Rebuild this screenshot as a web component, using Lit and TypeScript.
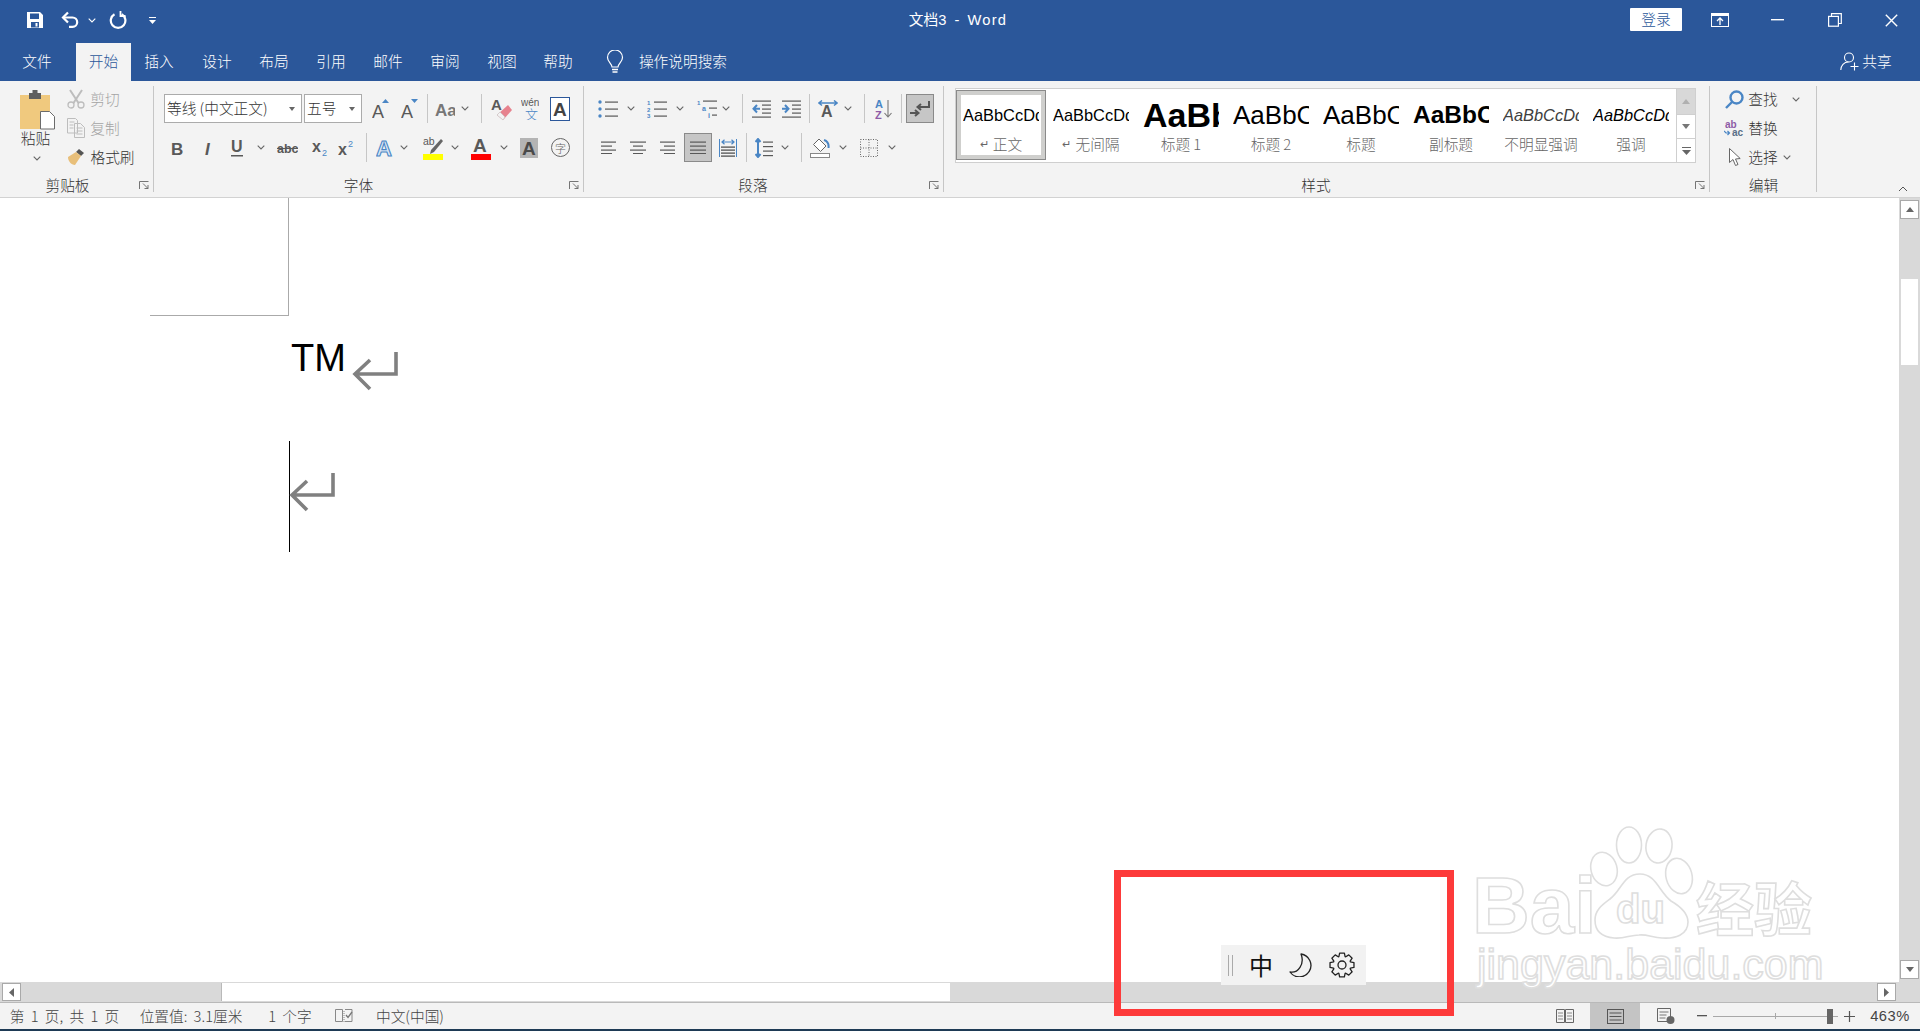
import { LitElement, html, css, svg } from "lit";
import { customElement } from "lit/decorators.js";

type It = [number, number, unknown, string?];

const row = (items: It[], origin: number, cls = "") => {
  let x = origin;
  return html`<div class="row ${cls}">${items.map(([c, w, t, k]) => {
    const l = c - w / 2;
    const m = l - x;
    x = l + w;
    return html`<div class="slot ${k ?? ""}" style="margin-left:${m}px;width:${w}px">${t}</div>`;
  })}</div>`;
};

const s = (w: number, h: number, c: unknown) =>
  html`<svg width=${w} height=${h} viewBox="0 0 ${w} ${h}" fill="none">${c}</svg>`;

const G = "#595959", B = "#4a86c5", D = "#2b579a";
const chev = (col = "#666") => s(8, 5, svg`<path d="M.7.7 4 4 7.3.7" stroke=${col} stroke-width="1.1"/>`);
const sep = () => html`<i class="vs"></i>`;
const letter = (t: string, x: number, y: number, size: number, fill: string, weight = "bold", style = "normal") =>
  svg`<text x=${x} y=${y} font-family="Liberation Sans" font-size=${size} font-weight=${weight} font-style=${style} fill=${fill}>${t}</text>`;
const lines = (x: number, w: number, ys: number[], col = G) =>
  svg`${ys.map((y) => svg`<rect x=${x} y=${y} width=${w} height="1.2" fill=${col}/>`)}`;

const gear = () => {
  const cx = 13, cy = 13, n = 8;
  let d = "";
  for (let i = 0; i < n; i++) {
    const a = (i / n) * Math.PI * 2;
    const st = Math.PI / n;
    const pts: [number, number][] = [
      [9, a - st * 0.9], [12.2, a - st * 0.5], [12.2, a + st * 0.5], [9, a + st * 0.9],
    ];
    pts.forEach(([r, t], j) => {
      d += `${i === 0 && j === 0 ? "M" : "L"}${(cx + r * Math.cos(t)).toFixed(2)} ${(cy + r * Math.sin(t)).toFixed(2)} `;
    });
  }
  return s(26, 26, svg`<path d="${d}Z" stroke="#222" stroke-width="1.3" stroke-linejoin="round"/><circle cx="13" cy="13" r="4" stroke="#222" stroke-width="1.3"/>`);
};

const ret = () => s(46, 40, svg`<path d="M44 1V23H4M18 9 3 23l15 15" stroke="#808080" stroke-width="3.6" fill="none"/>`);

const icons = {
  save: s(18, 18, svg`<path fill-rule="evenodd" fill="#fff" d="M1 1h13l3 3v13H1zM4 2.5V8h9V2.5zM5 11v5.5h8V11zM9.5 12h2v3.5h-2z"/>`),
  undo: s(20, 18, svg`<path d="M3 6.5h9.5a4.7 4.7 0 0 1 0 9.4H9" stroke="#fff" stroke-width="2.2"/><path d="M8 1.5 3 6.5l5 5" stroke="#fff" stroke-width="2.2"/>`),
  redo: s(18, 20, svg`<path d="M5.5 4.2a7.3 7.3 0 1 0 7.2 0" stroke="#fff" stroke-width="2.2"/><path d="M12.5 1v5h5" stroke="#fff" stroke-width="1.8" transform="translate(-1 0)"/>`),
  qat: s(8, 9, svg`<rect y="1" width="7" height="1" fill="#fff"/><path d="M0 4h7L3.5 8z" fill="#fff"/>`),
  display: s(18, 14, svg`<rect x=".5" y=".5" width="17" height="13" stroke="#fff"/><rect y="0" width="18" height="3" fill="#fff"/><path d="M9 12V5M6 8l3-3 3 3" stroke="#fff" stroke-width="1.3"/>`),
  min: s(13, 2, svg`<rect width="13" height="1.4" fill="#fff"/>`),
  restore: s(14, 14, svg`<rect x=".6" y="3.4" width="9.8" height="9.8" stroke="#fff" stroke-width="1.2"/><path d="M3.5 3.4V.7h9.8v9.8h-2.7" stroke="#fff" stroke-width="1.2"/>`),
  close: s(13, 13, svg`<path d="M.8.8l11.4 11.4M12.2.8.8 12.2" stroke="#fff" stroke-width="1.4"/>`),
  bulb: s(18, 24, svg`<path d="M6 17c0-3-4.500-5-4.500-9.500a7.500 7.500 0 0 1 15 0C16.500 12 12 14 12 17z" stroke="#fff" stroke-width="1.2"/><path d="M6 19.500h6M6.500 22h5" stroke="#fff" stroke-width="1.5"/>`),
  share: s(19, 19, svg`<circle cx="9" cy="5.500" r="4.500" stroke="#fff" stroke-width="1.1"/><path d="M.8 18c0-4.500 3.200-8 7.700-8M14.500 10.500V18.500M10.500 14.500h8" stroke="#fff" stroke-width="1.1"/>`),
  paste: s(36, 40, svg`<rect x="0" y="5" width="30" height="34" fill="#f0c97e"/><rect x="9" y="3" width="12" height="6" fill="#5f5f5f"/><rect x="12.500" y="0" width="5" height="5" fill="#5f5f5f"/><path d="M20.500 21.500h9l5 5v12.500h-14z" fill="#fff" stroke="#6b6b6b"/>`),
  cut: s(18, 20, svg`<circle cx="4" cy="16" r="3" stroke="#bdbdbd" stroke-width="1.3"/><circle cx="14" cy="16" r="3" stroke="#bdbdbd" stroke-width="1.3"/><path d="M3 1l8.500 13M15 1 6.500 14" stroke="#bdbdbd" stroke-width="2"/>`),
  copy: s(18, 20, svg`<path d="M.5.500h8l2 2V15H.5zM7.500 5.500h6l4 4v10h-10z" stroke="#bdbdbd" fill="#f3f3f3"/><path d="M2.500 4h5M2.500 7h4M2.500 10h4M9.500 10h6M9.500 13h6M9.500 16h6" stroke="#bdbdbd"/>`),
  brush: s(20, 18, svg`<path d="M13 1l5 4-3 3-5-4z" fill="#555"/><path d="M2 9l8-5 5 4-6 9c-4 0-7-4-7-8z" fill="#e8bf7a"/>`),
  aUp: s(17, 20, svg`${letter("A", 0, 19, 18, G, "normal")}<path d="M10 4h7L13.500 0z" fill=${B}/>`),
  aDown: s(17, 20, svg`${letter("A", 0, 19, 18, G, "normal")}<path d="M10 0h7l-3.500 4z" fill=${B}/>`),
  aa: s(20, 18, svg`${letter("Aa", 0, 16, 17, "#777")}`),
  eraser: s(21, 24, svg`${letter("A", 0, 13, 15, G)}<path d="M17 8l4 5-9 10-6-5z" fill="#e7828e"/><path d="M6 18l3-3 5 5-2 3z" fill="#f3f3f3" stroke="#bbb" stroke-width=".5"/>`),
  wen: s(18, 22, svg`${letter("wén", 0, 8, 10, G, "normal")}<text x="4" y="21" font-size="13" fill=${B} font-family="Noto Sans CJK SC">文</text>`),
  aBox: s(20, 24, svg`<rect x=".5" y=".5" width="19" height="23" stroke=${D} fill="#fff"/>${letter("A", 3, 19, 19, "#444", "bold")}`),
  b: s(12, 18, svg`${letter("B", 0, 16, 17, G)}`),
  i: s(10, 18, svg`${letter("I", 2, 16, 17, G, "bold", "italic")}`),
  u: s(13, 20, svg`${letter("U", 0, 14, 16, G)}<rect y="17" width="12" height="1.500" fill=${G}/>`),
  abc: s(21, 14, svg`${letter("abc", 0, 12, 12.500, G)}<rect y="7" width="21" height="1" fill=${G}/>`),
  sub: s(16, 18, svg`${letter("x", 0, 13, 16, G)}${letter("2", 10, 17, 9, B, "normal")}`),
  sup: s(16, 18, svg`${letter("x", 0, 16, 16, G)}${letter("2", 10, 8, 9, B, "normal")}`),
  fx: s(18, 22, svg`${letter("A", 0, 19, 22, "#fff")}<text x="0" y="19" font-family="Liberation Sans" font-size="22" font-weight="bold" fill="#dce9f6" stroke=${B} stroke-width="1.100">A</text>`),
  hi: s(20, 24, svg`${letter("ab", 0, 9, 10.500, G, "normal")}<path d="M18 3l2 2-9 11-4 2 1-4z" fill="#666"/><rect y="18" width="20" height="6" fill="#ff0"/>`),
  red: s(20, 24, svg`${letter("A", 2, 16, 19, G)}<rect y="18" width="20" height="6" fill="#f00"/>`),
  shade: s(18, 20, svg`<rect width="18" height="20" fill="#b4b4b4"/>${letter("A", 2, 17, 19, "#4a4a4a")}`),
  zi: s(19, 19, svg`<circle cx="9.500" cy="9.500" r="9" stroke="#666"/><text x="4" y="14.500" font-size="11" fill="#666" font-family="Noto Sans CJK SC">字</text>`),
  bullets: s(20, 18, svg`<circle cx="2" cy="2" r="1.700" fill=${B}/><circle cx="2" cy="9" r="1.700" fill=${B}/><circle cx="2" cy="16" r="1.700" fill=${B}/>${lines(7, 13, [1.5, 8.5, 15.5])}`),
  nums: s(20, 18, svg`${letter("1", 0, 5, 6, B)}${letter("2", 0, 12, 6, B)}${letter("3", 0, 18, 6, B)}${lines(7, 13, [1.5, 8.5, 15.5])}`),
  multi: s(20, 20, svg`${letter("1", 0, 6, 6, B)}${letter("a", 5, 12, 7, B)}${letter("i", 11, 19, 7, B)}${lines(6, 14, [1.5])}${lines(12, 8, [8.5])}${lines(15, 5, [15.5])}`),
  dedent: s(19, 18, svg`${lines(0, 19, [0.5, 16.5])}${lines(10, 9, [4.5, 8.5, 12.5])}<path d="M8 8.800H2M5 5 1.500 8.800 5 12.500" stroke=${B} stroke-width="2"/>`),
  indent: s(19, 18, svg`${lines(0, 19, [0.5, 16.5])}${lines(10, 9, [4.5, 8.5, 12.5])}<path d="M0 8.800h6M3 5l3.500 3.800L3 12.500" stroke=${B} stroke-width="2"/>`),
  cjk: s(20, 18, svg`${letter("A", 3, 17, 16, G)}<path d="M1 3h18M4 .500 1 3l3 2.500M16 .500 19 3l-3 2.500" stroke=${B} stroke-width="1.500"/>`),
  sort: s(18, 20, svg`${letter("A", 0, 9, 11, B)}${letter("Z", 0, 20, 11, "#8e5ba6")}<path d="M13 1v17M9.500 14l3.500 4 3.500-4" stroke="#777" stroke-width="1.100"/>`),
  para: s(22, 18, svg`<path d="M20 1v6H9M12 4 8.500 7l3.500 3" stroke="#555" stroke-width="2"/><path d="M1 13h8M6 10l3.500 3L6 16" stroke="#555" stroke-width="2"/>`),
  left: s(15, 13, svg`${lines(0, 15, [0.5, 8.5])}${lines(0, 11, [4.5, 12])}`),
  center: s(16, 13, svg`${lines(0, 16, [0.5, 8.5])}${lines(3, 10, [4.5, 12])}`),
  right: s(15, 13, svg`${lines(0, 15, [0.5, 8.5])}${lines(4, 11, [4.5, 12])}`),
  justify: s(16, 13, svg`${lines(0, 16, [0.5, 4.5, 8.5, 12])}`),
  dist: s(18, 18, svg`<path d="M.5 0v18M17.500 0v18" stroke=${B}/><path d="M3 3h12M5.500 .800 3 3l2.500 2.200M12.500 .800 15 3l-2.500 2.200" stroke=${B} stroke-width="1.200"/>${lines(2, 14, [7.5, 10.5, 13.5, 16.5], "#444")}`),
  spacing: s(18, 20, svg`<path d="M3 1v18M.5 4 3 1l2.500 3M.5 16 3 19l2.500-3" stroke=${B} stroke-width="2"/>${lines(8, 10, [3.5, 8, 12.5, 17])}`),
  fill: s(20, 20, svg`<path d="M9 1l7 7-5.500 5.500-7-7z" fill="#fff" stroke="#666"/><path d="M14 2c3 1 5 4 4.500 8" stroke=${B} stroke-width="2"/><rect x=".5" y="15.500" width="19" height="4" fill="#fff" stroke="#888"/>`),
  borders: s(18, 18, svg`<path d="M.5.500h17v17H.5zM.5 9h17M9 .500v17" stroke="#666" stroke-dasharray="1 1.500"/>`),
  launcher: s(10, 8, svg`<path d="M.5 8V.500H9.500M4 2.500 9 7.500M9 4v3.500H5.500" stroke="#666" stroke-width=".9"/>`),
  find: s(19, 19, svg`<circle cx="11.500" cy="7.500" r="6" stroke=${B} stroke-width="2.400"/><path d="M7 12 1 18" stroke=${B} stroke-width="2.400"/>`),
  replace: s(20, 17, svg`${letter("ab", 1, 8, 10, "#8e5ba6")}<path d="M0 11l2 2h3M3.500 11l2 2-2 2" stroke=${B} stroke-width="1.200"/>${letter("ac", 8, 16, 10, "#5a6f87")}`),
  select: s(12, 18, svg`<path d="M.5.500v14l3.500-3 2.500 6 2.500-1-2.500-5.500 4.700-.5z" fill="#fff" stroke="#666"/>`),
  up: s(10, 5, svg`<path d="M1 5 5 1l4 4" stroke="#555" fill="none"/>`),
  triU: (c: string) => s(8, 5, svg`<path d="M0 5h8L4 0z" fill=${c}/>`),
  triD: (c: string) => s(8, 5, svg`<path d="M0 0h8L4 5z" fill=${c}/>`),
  triL: s(5, 9, svg`<path d="M5 0v9L0 4.500z" fill="#666"/>`),
  triR: s(5, 9, svg`<path d="M0 0v9l5-4.500z" fill="#666"/>`),
  more: s(9, 8, svg`<rect width="9" height="1" fill="#666"/><path d="M0 3h9L4.500 8z" fill="#666"/>`),
  proof: s(18, 14, svg`<path d="M.5.500h7v12h-7zM10 .500h7v12h-7" stroke="#888"/><path d="M9 2v12" stroke="#888" stroke-dasharray="1 1"/><path d="M11 6l2 2.500L17 3" stroke="#777" stroke-width="1.300"/>`),
  read: s(18, 15, svg`<path d="M.5.500h8v13h-8zM9.500.500h8v13h-8z" stroke="#666"/><path d="M2 4h5M2 7h5M2 10h5M11 4h5M11 7h5M11 10h5" stroke="#888"/>`),
  print: s(17, 15, svg`<rect x=".5" y=".5" width="16" height="14" stroke="#555"/><path d="M2.500 4h12M2.500 7.500h12M2.500 11h12" stroke="#555"/>`),
  web: s(18, 16, svg`<path d="M.5.500h13v13H.5z" stroke="#666"/><path d="M2.500 4h9M2.500 7h7M2.500 10h6" stroke="#777"/><circle cx="13.500" cy="12" r="4" fill="#666"/>`),
  moon: s(24, 24, svg`<path d="M12 1A11.500 11.500 0 1 1 1 19C9 20.500 16 11 12 1Z" stroke="#222" stroke-width="1.300" fill="none" stroke-linejoin="round"/>`),
};

const tabs: [string, number][] = [["插入", 159], ["设计", 217], ["布局", 274], ["引用", 331], ["邮件", 388], ["审阅", 445], ["视图", 502], ["帮助", 558]];

const styleItems = [
  { t: "AaBbCcDd", c: "p-body", n: "正文", ret: true, sel: true },
  { t: "AaBbCcDd", c: "p-body", n: "无间隔", ret: true },
  { t: "AaBbC", c: "p-h1", n: "标题 1" },
  { t: "AaBbCcD", c: "p-h2", n: "标题 2" },
  { t: "AaBbCcD", c: "p-h2", n: "标题" },
  { t: "AaBbCcD", c: "p-sub", n: "副标题" },
  { t: "AaBbCcDd", c: "p-em1", n: "不明显强调" },
  { t: "AaBbCcDd", c: "p-em2", n: "强调" },
];

@customElement("app-root")
export class AppRoot extends LitElement {
  static styles = css`
    :host { display: block; width: 1920px; height: 1031px; overflow: hidden; position: relative;
      font-family: "Noto Sans CJK SC", "Liberation Sans", sans-serif; font-size: 14.7px; font-weight: 300; color: #333; background: #fff; }
    .app { display: flex; flex-direction: column; height: 1031px; }
    .row { display: flex; align-items: center; }
    .slot { display: flex; align-items: center; justify-content: center; white-space: nowrap; flex: none; line-height: 1; }
    svg { display: block; flex: none; }
    .title { height: 43px; flex: none; box-sizing: border-box; padding-bottom: 3px; background: #2b579a; color: #fff; }
    .tabs { height: 38px; flex: none; background: #2b579a; color: #fff; align-items: stretch; }
    .wtitle { font-family: "Liberation Sans", "Noto Sans CJK SC", sans-serif; font-weight: 400; }
    .wd { letter-spacing: 1.2px; }
    .signin { height: 23px; margin-top: -1px; background: #fff; color: #2b579a; border-radius: 1px; }
    .tabs .slot { padding-bottom: 1px; box-sizing: border-box; }
    .tabs .on { background: #f3f3f3; color: #2b579a; }
    .ribbon { height: 117px; flex: none; box-sizing: border-box; background: #f3f3f3; border-bottom: 1px solid #d2d2d2; display: flex; padding-top: 5px; }
    .group { flex: none; height: 110px; display: flex; flex-direction: column; }
    .gbody { height: 90px; flex: none; box-sizing: border-box; }
    .glabel { height: 19px; flex: none; display: flex; align-items: center; position: relative; }
    .sepv { width: 1px; height: 106px; background: #c6c6c6; flex: none; }
    .g1 { width: 153px; } .g2 { width: 429px; } .g3 { width: 359px; } .g4 { width: 765px; } .g5 { width: 106px; } .g6 { flex: 1; min-width: 0; }
    .launch { position: absolute; top: 5px; }
    .clip { display: flex; }
    .pastecol { width: 64px; flex: none; display: flex; flex-direction: column; align-items: center; padding: 4px 0 0 12px; box-sizing: border-box; }
    .pastecol .ptxt { margin: -2px 5px 0 0; height: 20px; line-height: 20px; }
    .pastecol .pch { margin: 8px 3px 0 0; }
    .rows3 { display: flex; flex-direction: column; }
    .rows3 > .row:first-child { margin-top: -1.5px; }
    .rows3 .row { height: 29px; flex: none; }
    .dim { color: #a4a4a4; }
    .rows2 { padding-top: 8px; display: flex; flex-direction: column; gap: 10px; }
    .rows2 .row { height: 29px; }
    .vs { display: block; width: 1px; height: 29px; background: #c6c6c6; }
    .sel { height: 29px; box-sizing: border-box; border: 1px solid #ababab; background: #fff; padding: 0 2px; justify-content: space-between; }
    .sel b { display: block; width: 0; height: 0; border: 3.500px solid transparent; border-top: 4px solid #666; border-bottom: 0; margin-right: 4px; }
    .act { height: 29px; box-sizing: border-box; background: #c6c6c6; border: 1px solid #8a8a8a; }
    .gallery { margin: 2px 0 0 11px; height: 75px; width: 741px; box-sizing: border-box; border: 1px solid #cfcfcf; background: #fff; display: flex; padding-top: 1px; }
    .gi { width: 90px; height: 70px; flex: none; box-sizing: border-box; padding-top: 5px; }
    .gi.s { box-shadow: inset 0 0 0 1px #8a8a8a, inset 0 0 0 5px #cfcfcd; }
    .pv { height: 40px; margin: 0 7px; overflow: hidden; display: flex; align-items: center; color: #000; white-space: nowrap; font-family: "Liberation Sans", sans-serif; font-weight: 400; line-height: 1; }
    .p-body { font-size: 16.4px; } .p-h1 { font-size: 34px; font-weight: bold; } .p-h2 { font-size: 26px; } .p-sub { font-size: 24.5px; font-weight: bold; }
    .p-em1 { font-size: 16.4px; font-style: italic; color: #404040; } .p-em2 { font-size: 16.4px; font-style: italic; }
    .nm { height: 18px; display: flex; align-items: center; justify-content: center; color: #666; line-height: 1; white-space: nowrap; }
    .nm span.r { font-size: 11px; margin-right: 4px; font-family: "DejaVu Sans", sans-serif; }
    .gscroll { margin-left: auto; width: 18px; flex: none; margin-top: -1px; border-left: 1px solid #cfcfcf; display: flex; flex-direction: column; box-sizing: content-box; }
    .gscroll div { display: flex; align-items: center; justify-content: center; flex: none; box-sizing: border-box; border-bottom: 1px solid #cfcfcf; }
    .gscroll .a { height: 26px; background: #d8d8d8; }
    .gscroll .b { height: 24px; }
    .gscroll .c { height: 24px; border-bottom: 0; }
    .collapse { display: flex; justify-content: flex-end; align-items: flex-end; height: 105px; padding-right: 12px; box-sizing: border-box; }
    .main { flex: 1; min-height: 0; display: flex; position: relative; }
    .doc { flex: 1; min-width: 0; }
    .crop { margin-left: 150px; width: 138px; height: 117px; border-right: 1px solid #aaa; border-bottom: 1px solid #aaa; }
    .tm { margin: 35px 0 0 291px; height: 50px; display: flex; align-items: flex-start; }
    .tm span { font-family: "Liberation Sans", sans-serif; font-weight: 400; font-size: 38px; color: #000; line-height: 1; margin-top: -12px; }
    .tm svg { margin-left: 6px; }
    .cur { margin: 40px 0 0 289px; height: 111px; box-sizing: border-box; border-left: 1.5px solid #000; padding-top: 31px; }
    .cur svg { margin-left: -1px; }
    .vbar { width: 21px; flex: none; background: #d9d9d9; display: flex; flex-direction: column; align-items: center; padding-top: 2px; box-sizing: border-box; }
    .btn { box-sizing: border-box; background: #fff; border: 1px solid #a9a9a9; display: flex; align-items: center; justify-content: center; flex: none; }
    .vbtn { width: 19px; height: 19px; }
    .vth { width: 17px; height: 86px; background: #fff; margin-top: 60px; flex: none; }
    .vbar .end { margin-top: auto; margin-bottom: 3px; }
    .hbar { height: 21px; flex: none; background: #d9d9d9; border-bottom: 1px solid #b9b9b9; box-sizing: border-box; display: flex; align-items: center; }
    .hbtn { width: 19px; height: 18px; margin-left: 2px; }
    .hth { width: 729px; height: 18px; background: #fff; margin-left: 200px; border-left: 1px solid #b9b9b9; box-sizing: border-box; }
    .hbar .rbtn { margin-left: 927px; }
    .status { height: 26px; flex: none; background: #f3f3f3; color: #444; font-size: 14.7px; word-spacing: 3px; }
    .status .on { background: #c4c4c4; height: 26px; }
    .bottom { height: 2px; flex: none; background: #1e3a55; }
    .pct { font-family: "Liberation Sans", sans-serif; font-weight: 400; letter-spacing: .5px; }
    .slider { height: 26px; position: relative; }
    .sl { position: absolute; left: 0; right: 0; top: 12.500px; height: 1px; background: #a8a8a8; }
    .tick { position: absolute; left: 62px; top: 10px; height: 6px; width: 1px; background: #a8a8a8; }
    .knob { position: absolute; left: 114px; top: 6px; width: 6px; height: 15px; background: #666; }
    .mark { position: absolute; left: 1475px; top: 825px; width: 345px; height: 170px; pointer-events: none; }
    .mark svg { overflow: visible; }
    .ime { position: absolute; left: 1221px; top: 945px; width: 145px; height: 40px; background: #f2f2f2; display: flex; align-items: center; color: #111; }
    .grip { width: 3px; height: 21px; border-left: 1px solid #aaa; border-right: 1px solid #aaa; margin-left: 7px; flex: none; }
    .zh { font-size: 24px; line-height: 1; margin-left: 16px; font-weight: 400; }
    .ime .m { margin-left: 16px; }
    .ime .g { margin-left: 16px; }
    .redbox { position: absolute; left: 1114px; top: 870px; width: 340px; height: 146px; box-sizing: border-box; border: 7px solid #fd3a3a; pointer-events: none; }
  `;

  render() {
    const lab = (t: string) => html`<span>${t}</span>`;
    return html`<div class="app">
      ${row([
        [35, 18, icons.save], [70, 20, icons.undo], [92, 8, chev("#fff")], [118, 18, icons.redo], [153, 8, icons.qat],
        [958, 112, html`<span>文档3&nbsp;&nbsp;-&nbsp;&nbsp;<span class="wd">Word</span></span>`, "wtitle"],
        [1656, 52, "登录", "signin"], [1720, 18, icons.display], [1777, 13, icons.min], [1835, 14, icons.restore], [1891, 13, icons.close],
      ], 0, "title")}
      ${row([
        [37, 40, "文件"], [103.5, 55, "开始", "on"],
        ...tabs.map(([t, c]): It => [c, 40, t]),
        [615, 18, icons.bulb], [683, 92, "操作说明搜索"], [1849, 19, icons.share], [1877, 32, "共享"],
      ], 0, "tabs")}
      <div class="ribbon">
        <div class="group g1">
          <div class="gbody clip">
            <div class="pastecol">${icons.paste}<div class="ptxt">粘贴</div><div class="pch">${chev()}</div></div>
            <div class="rows3">
              ${row([[75.5, 18, icons.cut], [105, 32, "剪切", "dim"]], 64)}
              ${row([[75.5, 18, icons.copy], [105, 32, "复制", "dim"]], 64)}
              ${row([[76, 20, icons.brush], [112.500, 46, "格式刷"]], 64)}
            </div>
          </div>
          <div class="glabel">${row([[67.5, 48, lab("剪贴板")]], 0)}<span class="launch" style="left:139px">${icons.launcher}</span></div>
        </div>
        <i class="sepv"></i>
        <div class="group g2">
          <div class="gbody rows2">
            ${row([
              [233, 138, html`<span>等线 (中文正文)</span><b></b>`, "sel"],
              [333, 58, html`<span>五号</span><b></b>`, "sel"],
              [380, 17, icons.aUp], [409, 17, icons.aDown], [427, 1, sep()], [445, 20, icons.aa], [465, 8, chev()], [481, 1, sep()],
              [501, 21, icons.eraser], [530, 18, icons.wen], [560, 20, icons.aBox],
            ], 154)}
            ${row([
              [177, 12, icons.b], [208, 10, icons.i], [237, 13, icons.u], [261, 8, chev()], [287, 21, icons.abc], [320, 16, icons.sub], [346, 16, icons.sup],
              [366, 1, sep()], [385, 18, icons.fx], [404, 8, chev()], [433, 20, icons.hi], [455, 8, chev()], [481, 20, icons.red], [504, 8, chev()], [529, 18, icons.shade], [560, 19, icons.zi],
            ], 154)}
          </div>
          <div class="glabel">${row([[358.5, 34, lab("字体")]], 154)}<span class="launch" style="left:415px">${icons.launcher}</span></div>
        </div>
        <i class="sepv"></i>
        <div class="group g3">
          <div class="gbody rows2">
            ${row([
              [608, 20, icons.bullets], [631, 8, chev()], [657, 20, icons.nums], [680, 8, chev()], [707, 20, icons.multi], [726, 8, chev()], [742, 1, sep()],
              [761, 19, icons.dedent], [791, 19, icons.indent], [809, 1, sep()], [828, 20, icons.cjk], [848, 8, chev()], [864, 1, sep()],
              [883.500, 18, icons.sort], [901, 1, sep()], [920, 28, icons.para, "act"],
            ], 584)}
            ${row([
              [608, 15, icons.left], [638, 16, icons.center], [667.500, 15, icons.right], [698, 28, icons.justify, "act"], [728, 18, icons.dist], [746, 1, sep()],
              [764, 18, icons.spacing], [785, 8, chev()], [801, 1, sep()], [820, 20, icons.fill], [843, 8, chev()], [868.500, 18, icons.borders], [892, 8, chev()],
            ], 584)}
          </div>
          <div class="glabel">${row([[753, 34, lab("段落")]], 584)}<span class="launch" style="left:345px">${icons.launcher}</span></div>
        </div>
        <i class="sepv"></i>
        <div class="group g4">
          <div class="gbody"><div class="gallery">
            ${styleItems.map((it) => html`<div class="gi ${it.sel ? "s" : ""}">
              <div class="pv"><span class=${it.c}>${it.t}</span></div>
              <div class="nm">${it.ret ? html`<span class="r">↵</span>` : ""}${it.n}</div>
            </div>`)}
            <div class="gscroll">
              <div class="a">${icons.triU("#b0b0b0")}</div>
              <div class="b">${icons.triD("#777")}</div>
              <div class="c">${icons.more}</div>
            </div>
          </div></div>
          <div class="glabel">${row([[1316, 34, lab("样式")]], 944)}<span class="launch" style="left:751px">${icons.launcher}</span></div>
        </div>
        <i class="sepv"></i>
        <div class="group g5">
          <div class="gbody rows3">
            ${row([[1734, 19, icons.find], [1763, 32, "查找"], [1796, 8, chev()]], 1710)}
            ${row([[1734, 20, icons.replace], [1763, 32, "替换"]], 1710)}
            ${row([[1735, 12, icons.select], [1763, 32, "选择"], [1787, 8, chev()]], 1710)}
          </div>
          <div class="glabel">${row([[1763.5, 34, lab("编辑")]], 1710)}</div>
        </div>
        <i class="sepv"></i>
        <div class="group g6"><div class="collapse">${icons.up}</div></div>
      </div>
      <div class="main">
        <div class="doc">
          <div class="crop"></div>
          <div class="tm"><span>TM</span>${ret()}</div>
          <div class="cur">${ret()}</div>
        </div>
        <div class="vbar">
          <div class="btn vbtn">${icons.triU("#666")}</div>
          <div class="vth"></div>
          <div class="btn vbtn end">${icons.triD("#666")}</div>
        </div>
      </div>
      <div class="hbar">
        <div class="btn hbtn">${icons.triL}</div>
        <div class="hth"></div>
        <div class="btn hbtn rbtn">${icons.triR}</div>
      </div>
      ${row([
        [64.5, 114, "第 1 页, 共 1 页"], [191, 108, "位置值: 3.1厘米"], [290, 44, "1 个字"], [344, 18, icons.proof], [410, 72, "中文(中国)"],
        [1564.5, 18, icons.read], [1615, 50, icons.print, "on"], [1665.5, 18, icons.web], [1701.5, 10, s(10, 2, svg`<rect width="10" height="1.300" fill="#555"/>`)],
        [1775.5, 125, html`<div class="sl"></div><div class="tick"></div><div class="knob"></div>`, "slider"],
        [1849, 11, s(11, 11, svg`<path d="M5.500 0v11M0 5.500h11" stroke="#555" stroke-width="1.200"/>`)],
        [1890, 44, "463%", "pct"],
      ], 0, "status")}
      <div class="bottom"></div>
    </div>
    <div class="mark">${s(345, 170, svg`
      <g stroke="#dedede" stroke-width="1.600" fill="#fff">
        <ellipse cx="129" cy="44" rx="13" ry="17" transform="rotate(-15 129 44)"/>
        <ellipse cx="154" cy="20" rx="12.500" ry="18"/>
        <ellipse cx="184" cy="21" rx="13" ry="17" transform="rotate(8 184 21)"/>
        <ellipse cx="204" cy="51" rx="13" ry="18" transform="rotate(-15 204 51)"/>
        <path d="M165 49c16 0 19 18 31 27 12 7 17 13 17 21 0 13-13 17-26 16-9 0-15-4-23-3-9 0-15 4-25 3-12-1-19-7-19-18 0-10 7-15 15-21 12-9 13-25 30-25z"/>
        <text x="-3" y="108" font-family="Liberation Sans" font-weight="bold" font-size="80">Bai</text>
        <text x="141" y="98" font-family="Liberation Sans" font-size="40" font-weight="bold">du</text>
        <text x="221" y="106" font-family="Noto Sans CJK SC" font-size="58" font-weight="bold">经验</text>
        <text x="2" y="154" font-family="Liberation Sans" font-size="43">jingyan.baidu.com</text>
      </g>`)}</div>
    <div class="ime"><i class="grip"></i><span class="zh">中</span><span class="m">${icons.moon}</span><span class="g">${gear()}</span></div>
    <div class="redbox"></div>`;
  }
}
